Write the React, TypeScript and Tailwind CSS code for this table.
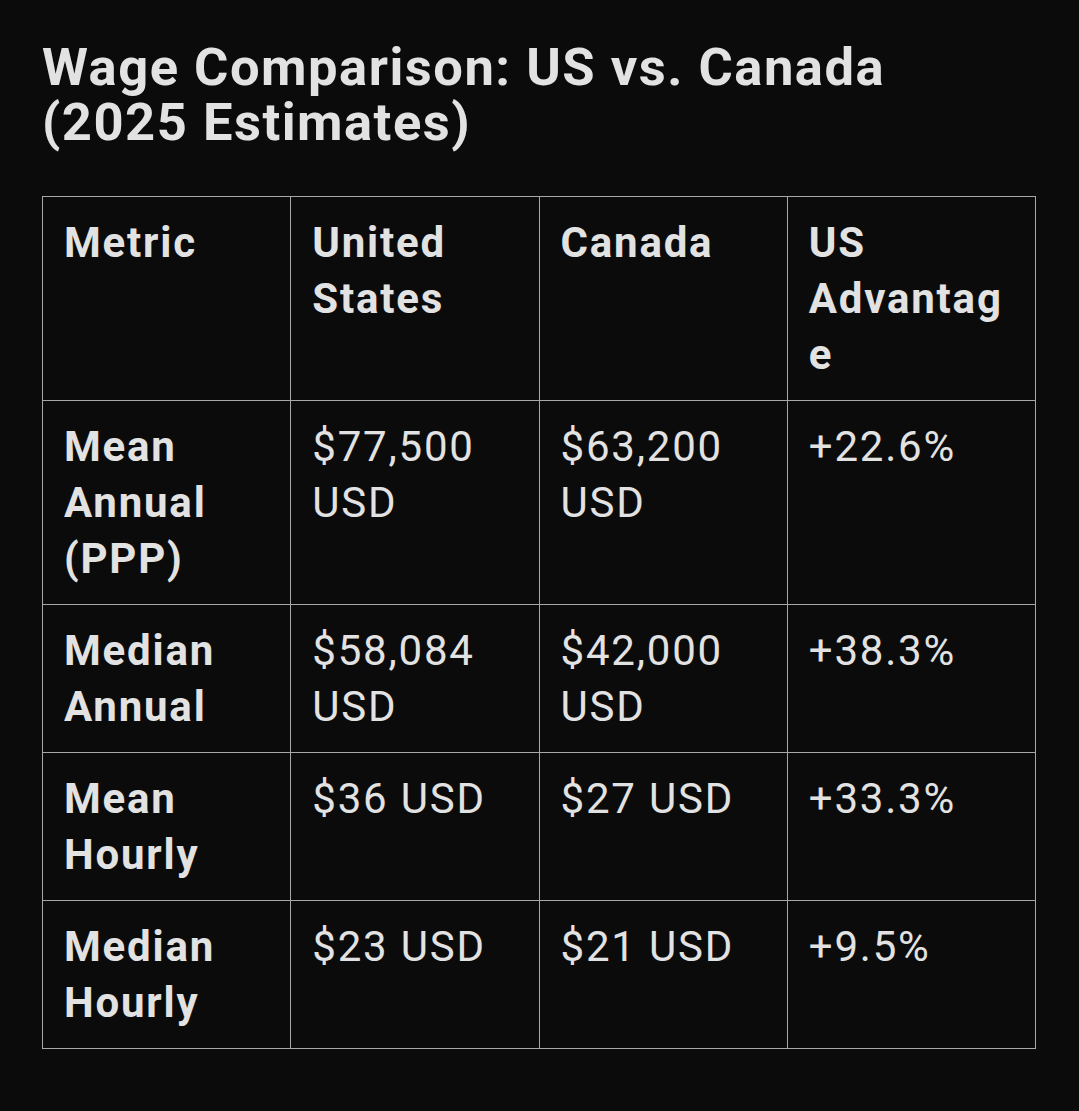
import React from "react";

const rows: [string, string, string, string][] = [
  ["Mean Annual (PPP)", "$77,500 USD", "$63,200 USD", "+22.6%"],
  ["Median Annual", "$58,084 USD", "$42,000 USD", "+38.3%"],
  ["Mean Hourly", "$36 USD", "$27 USD", "+33.3%"],
  ["Median Hourly", "$23 USD", "$21 USD", "+9.5%"],
];

export default function App() {
  return (
    <div
      className="min-h-[1111px] w-full bg-[#0b0b0b] text-[#e2e2e2] pl-[42px] pr-[43px] pt-[40px]"
      style={{ fontFamily: "Roboto, 'Liberation Sans', sans-serif" }}
    >
      <h1 className="text-[52.5px] leading-[55px] font-bold tracking-[1.5px] m-0">
        Wage Comparison: US vs. Canada (2025 Estimates)
      </h1>
      <table className="mt-[46px] w-full table-fixed border-collapse text-[42px] leading-[56px] tracking-[1.8px]">
        <thead>
          <tr>
            {["Metric", "United States", "Canada", "US Advantage"].map((h) => (
              <th
                key={h}
                className="border border-[#a8a8a8] px-[21px] py-[17.5px] text-left align-top font-bold [overflow-wrap:anywhere]"
              >
                {h}
              </th>
            ))}
          </tr>
        </thead>
        <tbody>
          {rows.map((r) => (
            <tr key={r[0]}>
              <td className="border border-[#a8a8a8] px-[21px] py-[17.5px] align-top font-bold [overflow-wrap:anywhere]">
                {r[0]}
              </td>
              {r.slice(1).map((c, i) => (
                <td
                  key={i}
                  className="border border-[#a8a8a8] px-[21px] py-[17.5px] align-top font-normal [overflow-wrap:anywhere]"
                >
                  {c}
                </td>
              ))}
            </tr>
          ))}
        </tbody>
      </table>
    </div>
  );
}
